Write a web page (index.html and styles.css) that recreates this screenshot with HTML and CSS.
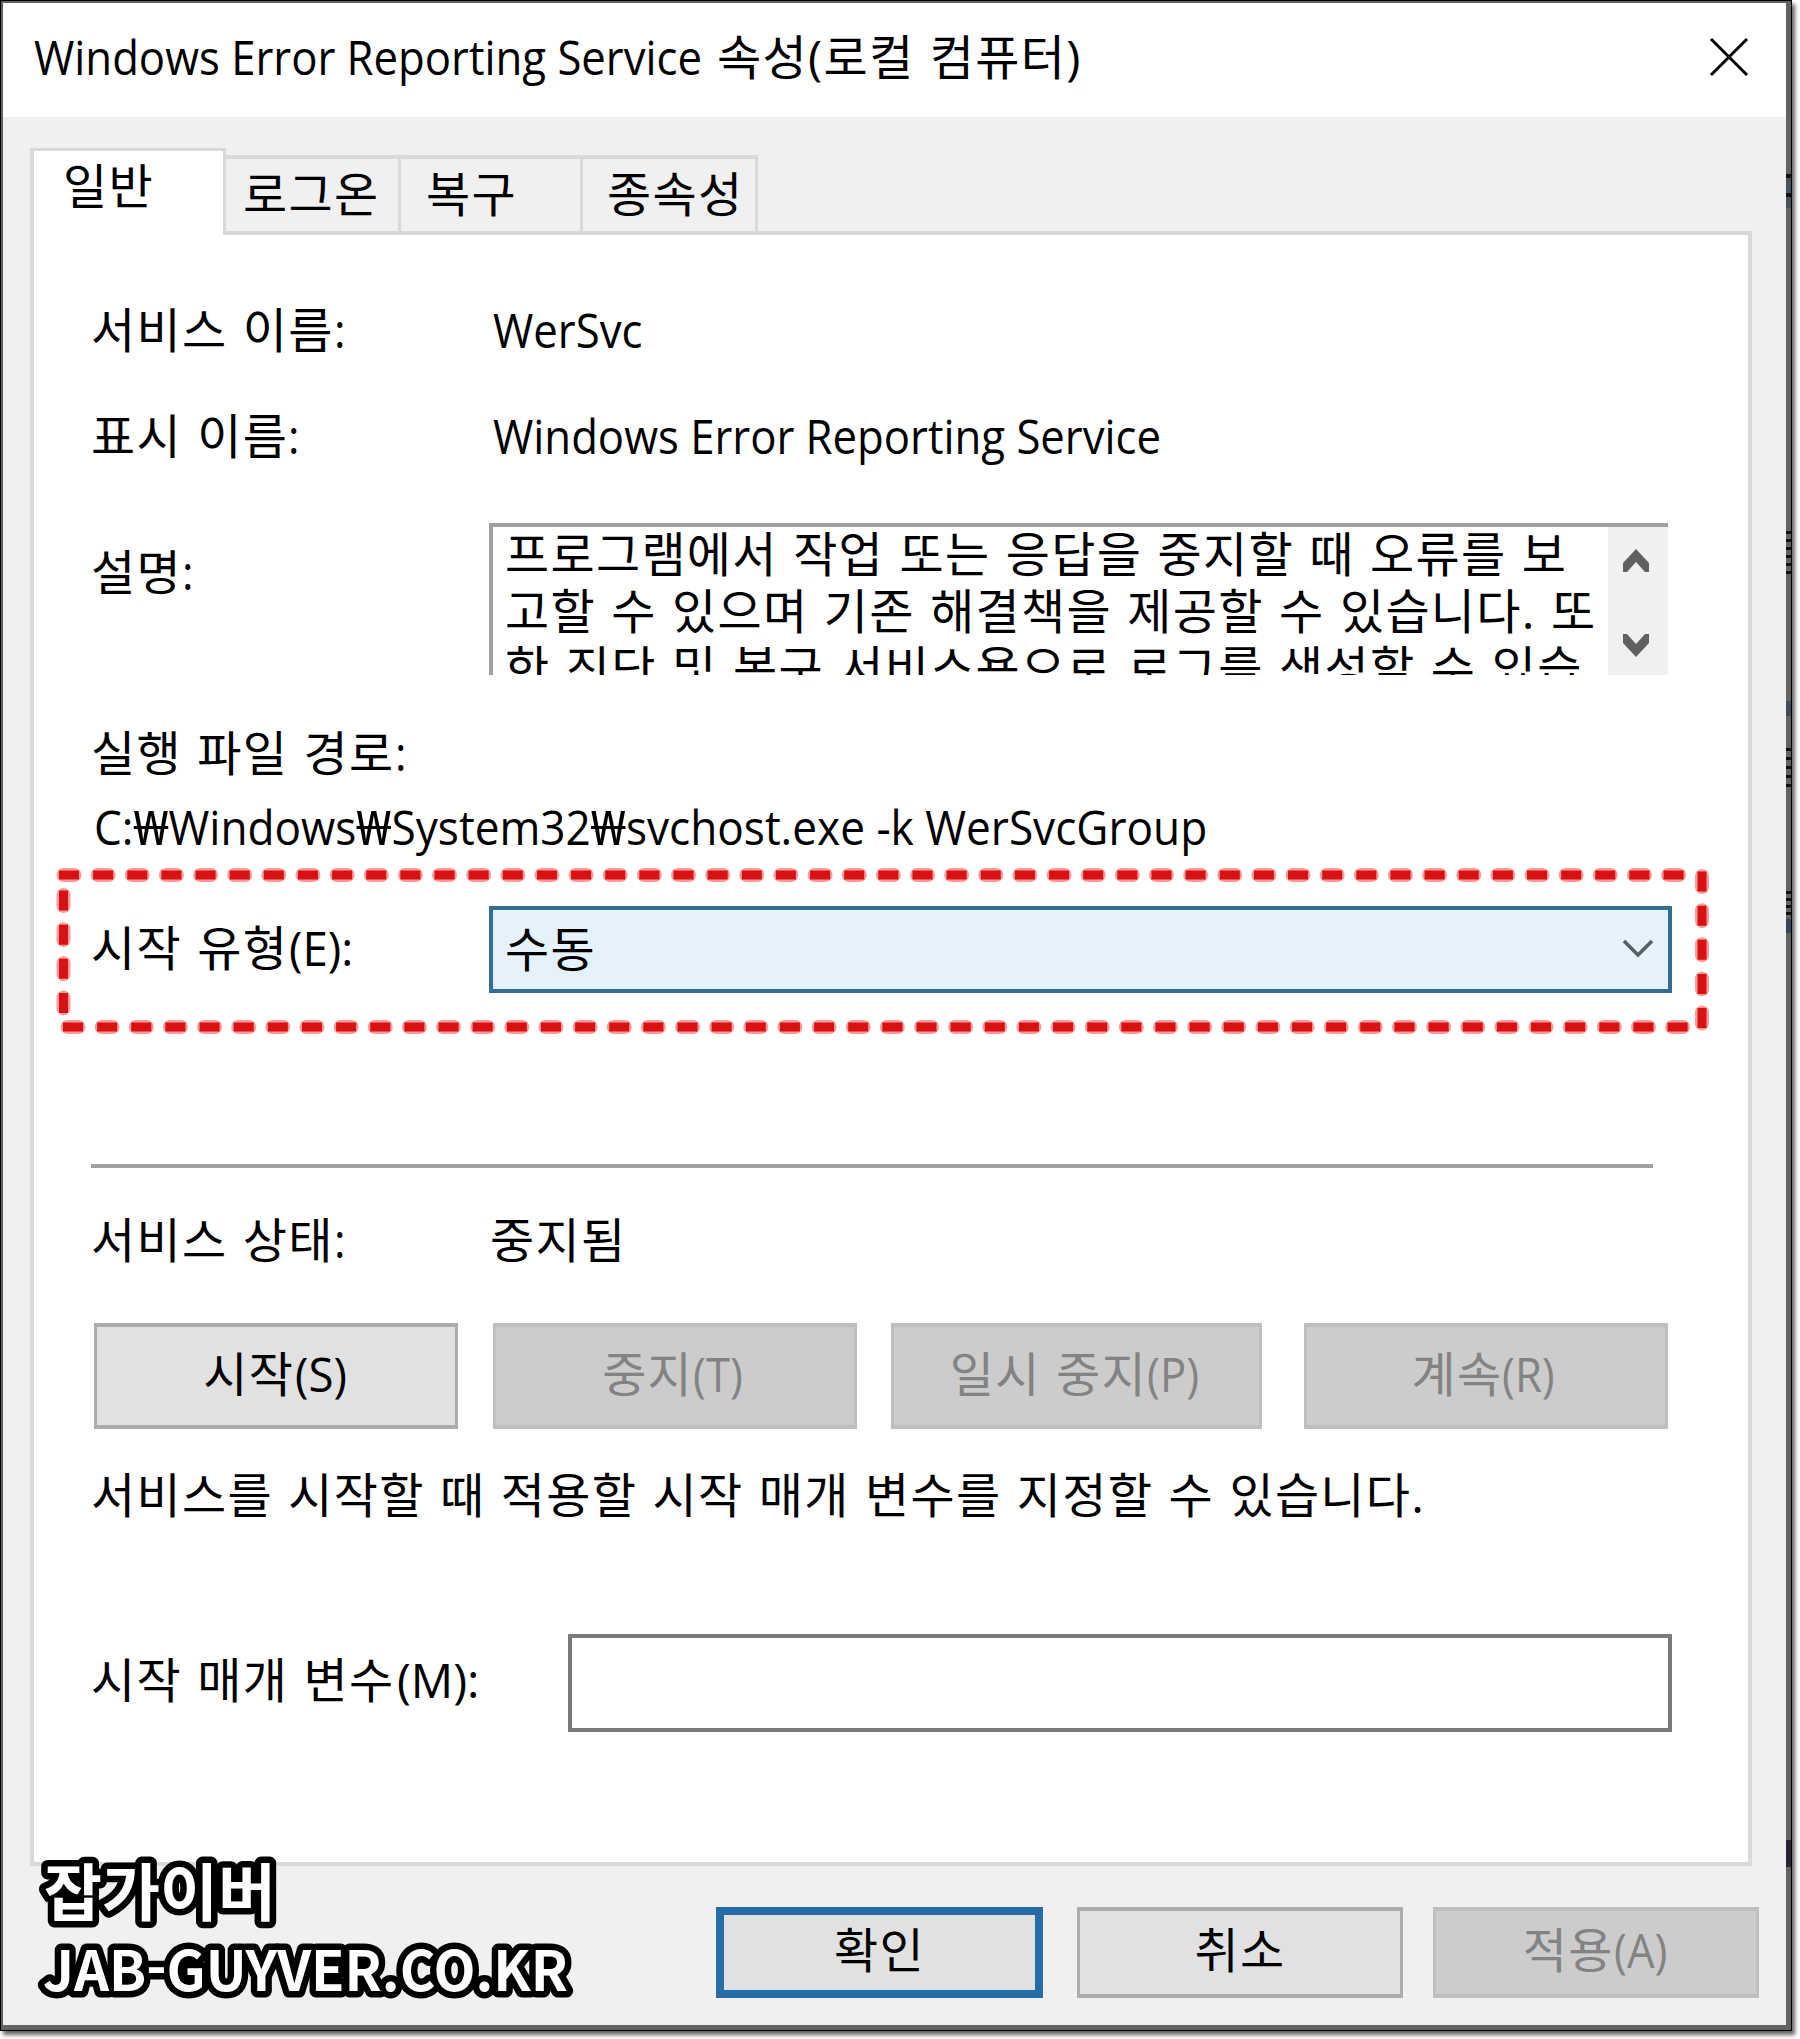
FILE: index.html
```
<!DOCTYPE html>
<html lang="ko">
<head>
    <meta charset="UTF-8">
    <meta name="viewport" content="width=device-width, initial-scale=1.0">
    <title>Windows Error Reporting Service 속성</title>
    <link rel="stylesheet" href="styles.css">
</head>
<body>
    <div class="window">
        <div class="frame">
            <header class="titlebar">
                <h1><span class="en title-en">Windows Error Reporting Service</span>속성(로컬 컴퓨터)</h1>
                <svg class="close" width="40" height="40" viewBox="0 0 40 40">
                    <path d="M2 2L38 38M38 2L2 38" stroke="#000" stroke-width="3" fill="none"/>
                </svg>
            </header>

            <nav class="tabs">
                <div class="tab active">일반</div>
                <div class="tab logon">로그온</div>
                <div class="tab recovery">복구</div>
                <div class="tab depend">종속성</div>
            </nav>

            <main class="panel">
                <div class="row name-row">
                    <span class="label">서비스 이름<span class="en">:</span></span>
                    <span class="value"><span class="en">WerSvc</span></span>
                </div>
                <div class="row display-row">
                    <span class="label">표시 이름<span class="en">:</span></span>
                    <span class="value"><span class="en">Windows Error Reporting Service</span></span>
                </div>
                <div class="row desc-row">
                    <span class="label">설명<span class="en">:</span></span>
                    <div class="description">
                        <p>프로그램에서 작업 또는 응답을 중지할 때 오류를 보<br>고할 수 있으며 기존 해결책을 제공할 수 있습니다. 또<br>한 진단 및 복구 서비스용으로 로그를 생성할 수 있습</p>
                        <div class="scrollbar">
                            <svg width="28" height="24" viewBox="0 0 28 24"><path d="M1 14L14 0L27 14V23H23L14 13L5 23H1Z" fill="#606060"/></svg>
                            <svg width="28" height="24" viewBox="0 0 28 24"><path d="M1 10L14 24L27 10V1H23L14 11L5 1H1Z" fill="#606060"/></svg>
                        </div>
                    </div>
                </div>
                <div class="path-label">실행 파일 경로<span class="en">:</span></div>
                <div class="path"><span class="en">C:<span class="won">₩</span>Windows<span class="won">₩</span>System32<span class="won">₩</span>svchost.exe -k WerSvcGroup</span></div>

                <div class="row startup-row">
                    <span class="label">시작 유형<span class="en key">(E):</span></span>
                    <div class="select">
                        <span>수동</span>
                        <svg width="34" height="22" viewBox="0 0 34 22"><path d="M3 3L17 17L31 3" stroke="#555f68" stroke-width="3.5" fill="none"/></svg>
                    </div>
                    <!-- 강조 표시 점선 -->
                    <svg class="highlight" width="1670" height="180" viewBox="0 0 1670 180">
                        <g class="dash-soft">
                            <path d="M13.5 15H1634"/>
                            <path d="M17.5 167H1638"/>
                            <path d="M13.5 35V152"/>
                            <path d="M1652 16V167"/>
                        </g>
                        <g class="dash-core">
                            <path d="M9 15H1634"/>
                            <path d="M13 167H1638"/>
                            <path d="M13.5 30.5V155"/>
                            <path d="M1652 11.5V170"/>
                        </g>
                    </svg>
                </div>

                <hr>

                <div class="row status-row">
                    <span class="label">서비스 상태<span class="en">:</span></span>
                    <span class="value status">중지됨</span>
                </div>
                <div class="actions">
                    <button>시작<span class="en key">(S)</span></button>
                    <button disabled>중지<span class="en">(T)</span></button>
                    <button disabled>일시 중지<span class="en">(P)</span></button>
                    <button disabled>계속<span class="en">(R)</span></button>
                </div>
                <p class="hint">서비스를 시작할 때 적용할 시작 매개 변수를 지정할 수 있습니다.</p>
                <div class="row param-row">
                    <span class="label">시작 매개 변수<span class="en key">(M):</span></span>
                    <input type="text">
                </div>
            </main>

            <footer class="buttons">
                <button class="default">확인</button>
                <button>취소</button>
                <button disabled>적용<span class="en">(A)</span></button>
            </footer>
        </div>
        <svg class="watermark" width="560" height="170" viewBox="0 0 560 170">
            <text class="mark-ko" x="13" y="66" textLength="232" lengthAdjust="spacingAndGlyphs">잡가이버</text>
            <text class="mark-en" x="12" y="141" textLength="525" lengthAdjust="spacingAndGlyphs">JAB-GUYVER.CO.KR</text>
        </svg>
    </div>
</body>
</html>
```
FILE: styles.css
```
* {
    margin: 0;
    padding: 0;
    box-sizing: border-box;
}

body {
    width: 1800px;
    height: 2039px;
    background: #fff;
    overflow: hidden;
    color: #000;
    font-family: "Open Sans", "Noto Sans CJK KR", sans-serif;
    font-size: 48px;
    line-height: 60px;
    letter-spacing: 1.3px;
    word-spacing: 1.6px;
    white-space: nowrap;
}

/* 창 테두리 */
.window {
    position: relative;
    width: 1792px;
    height: 2031px;
    padding: 2px 5px 5px 2px;
    border: 1px solid #000;
    background-color: #626262;
    background-image:
        linear-gradient(transparent 173px, #111 173px 177px, #47525a 177px 192px, #111 192px 196px, #47525a 196px 207px, transparent 207px),
        repeating-linear-gradient(#111 0 3px, #626262 3px 8px),
        linear-gradient(#404b5a, #404b5a),
        repeating-linear-gradient(#111 0 3px, #626262 3px 9px),
        repeating-linear-gradient(#111 0 3px, #626262 3px 7px),
        linear-gradient(#36455a, #36455a),
        linear-gradient(#2d2433, #2d2433);
    background-size: 5px 100%, 5px 43px, 5px 15px, 5px 39px, 5px 27px, 5px 14px, 5px 27px;
    background-position: right 0, right 530px, right 700px, right 747px, right 890px, right 918px, right 1839px;
    background-repeat: no-repeat;
    box-shadow: 3px 4px 4px rgba(0, 0, 0, 0.6);
}

.frame {
    height: 2022px;
    background: #f0f0f0;
}

.en {
    display: inline-block;
    letter-spacing: 0;
    word-spacing: 0;
    transform: scaleX(0.91);
    transform-origin: left;
}

.en.key {
    margin-left: 1px;
    transform: scaleX(0.95);
}

.titlebar {
    display: flex;
    justify-content: space-between;
    height: 114px;
    padding: 24px 37px 0 31px;
    background: #fff;
}

.titlebar h1 {
    font-size: 48px;
    font-weight: normal;
}

.title-en {
    margin-right: -51px;
}

.close {
    margin-top: 10px;
}

/* 탭 */
.tabs {
    display: flex;
    align-items: flex-end;
    position: relative;
    height: 118px;
    margin: 0 0 -4px 27px;
}

.tab {
    height: 80px;
    padding-top: 5px;
    border: solid #d9d9d9;
    border-width: 4px 3px 4px 0;
}

.tab.active {
    width: 196px;
    height: 87px;
    padding: 5px 0 0 29px;
    border-width: 3px 3px 0 4px;
    background: #fff;
}

.logon {
    width: 175px;
    padding-left: 17px;
}

.recovery {
    width: 182px;
    padding-left: 25px;
}

.depend {
    width: 175px;
    padding-left: 24px;
}

.panel {
    width: 1722px;
    height: 1635px;
    margin-left: 27px;
    padding: 65px 0 0 57px;
    border: 4px solid #d9d9d9;
    background: #fff;
}

.row {
    display: flex;
    position: relative;
}

.label {
    width: 398px;
}

.value {
    padding-left: 4px;
}

.display-row {
    margin-top: 46px;
}

.desc-row {
    margin-top: 57px;
}

.desc-row .label {
    padding-top: 19px;
}

.description {
    display: flex;
    justify-content: space-between;
    width: 1179px;
    height: 152px;
    overflow: hidden;
    border: solid #a0a0a0;
    border-width: 4px 0 0 4px;
}

.description p {
    margin-top: -2px;
    padding-left: 12px;
    line-height: 57px;
}

.scrollbar {
    display: flex;
    flex-direction: column;
    justify-content: space-between;
    align-items: center;
    width: 60px;
    padding: 22px 4px 18px 0;
    background: #f0f0f0;
}

.path-label {
    margin-top: 48px;
}

.path {
    margin-top: 14px;
    padding-left: 3px;
}

.path .en {
    transform: scaleX(0.92);
}

.path .won {
    display: inline-block;
    margin: 0 3px;
    font-family: "Noto Sans";
    transform: scaleX(1.2);
}

/* 시작 유형 */
.startup-row {
    margin-top: 49px;
}

.startup-row .label {
    padding-top: 12px;
}

.select {
    display: flex;
    justify-content: space-between;
    align-items: center;
    width: 1183px;
    height: 87px;
    padding: 0 13px 2px 12px;
    border: 4px solid #346c94;
    background: #e5f1fb;
}

.highlight {
    position: absolute;
    left: -41px;
    top: -46px;
}

.highlight path {
    fill: none;
}

.dash-soft {
    stroke: #fa9a9a;
    stroke-width: 14;
    stroke-linecap: round;
    stroke-dasharray: 11 23.14;
}

.dash-core {
    stroke: #d81212;
    stroke-width: 9;
    stroke-dasharray: 20 14.14;
}

hr {
    width: 1562px;
    height: 4px;
    margin-top: 171px;
    border: none;
    background: #a0a0a0;
}

.status-row {
    margin-top: 42px;
}

.status {
    padding-left: 1px;
}

button {
    padding-bottom: 6px;
    border: 4px solid #adadad;
    border-left-width: 3px;
    border-right-width: 3px;
    background: #e1e1e1;
    color: #000;
    font: inherit;
    letter-spacing: inherit;
    word-spacing: inherit;
}

button .en {
    margin-right: -3px;
}

button:disabled {
    border-color: #bfbfbf;
    background: #ccc;
    color: #838383;
}

.actions {
    display: grid;
    grid-template-columns: 364px 364px 371px 364px;
    column-gap: 34.5px;
    height: 106px;
    margin: 53px 0 0 3px;
}

.actions button {
    padding: 0 2px 4px 0;
}

.actions button:last-child {
    margin: 0 -7px 0 7px;
}

.hint {
    margin-top: 36px;
}

.param-row {
    margin-top: 109px;
}

.param-row .label {
    width: 477px;
    padding-top: 16px;
}

.param-row .en.key {
    margin-left: 2px;
    transform: scaleX(0.98);
}

.param-row input {
    width: 1104px;
    height: 98px;
    border: 4px solid #7a7a7a;
    background: #fff;
}

.buttons {
    display: flex;
    justify-content: flex-end;
    gap: 30px;
    height: 91px;
    margin: 41px 27px 0 0;
}

.buttons button {
    width: 326px;
}

.buttons .default {
    width: 327px;
    margin-right: 4px;
    border: 8px solid #266da8;
}

/* 워터마크 */
.watermark {
    position: absolute;
    left: 30px;
    top: 1849px;
}

.watermark text {
    fill: #fff;
    stroke: #000;
    stroke-width: 13;
    stroke-linejoin: round;
    paint-order: stroke;
    font-family: "Noto Sans CJK KR", sans-serif;
    font-weight: bold;
    letter-spacing: 0;
}

.mark-ko {
    font-size: 62px;
}

.mark-en {
    font-size: 55px;
}
```
